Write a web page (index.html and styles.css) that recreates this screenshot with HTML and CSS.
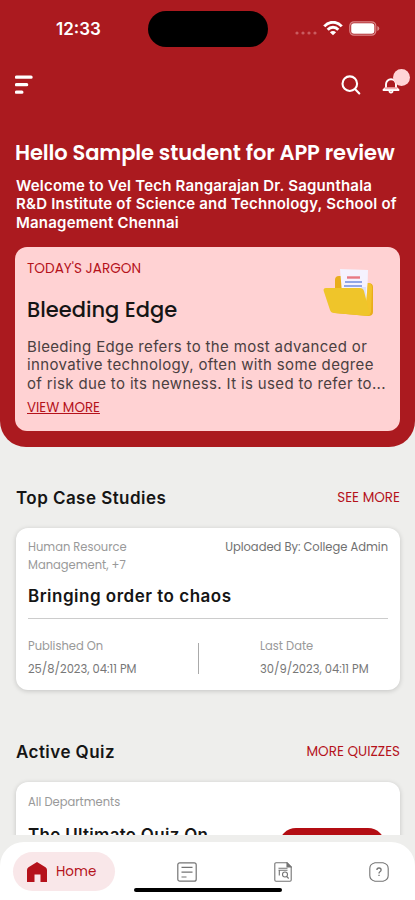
FILE: index.html
```html
<!DOCTYPE html>
<html lang="en">
<head>
    <meta charset="UTF-8">
    <meta name="viewport" content="width=device-width, initial-scale=1.0">
    <title>Home</title>
    <link rel="stylesheet" href="styles.css">
</head>
<body>
    <div class="content">
        <header class="hero">
            <div class="status-bar">
                <span class="time">12:33</span>
                <div class="island"></div>
                <div class="status-icons">
                    <svg class="signal" width="22" height="4" viewBox="0 0 22 4"><circle cx="2" cy="2" r="1.6"/><circle cx="8" cy="2" r="1.6"/><circle cx="14" cy="2" r="1.6"/><circle cx="20" cy="2" r="1.6"/></svg>
                    <svg class="wifi" width="20" height="15" viewBox="0 0 20 15" fill="none" stroke="#fff" stroke-width="2.9">
                        <path d="M1.3 5.4C6-.1 14-.1 18.7 5.4"/>
                        <path d="M4.7 8.7C7.7 5.5 12.3 5.5 15.3 8.7"/>
                        <path d="M10 14.3 6.9 11.2Q10 8.7 13.1 11.2Z" fill="#fff" stroke="none"/>
                    </svg>
                    <svg class="battery" width="31" height="15" viewBox="0 0 31 15">
                        <rect x=".8" y=".8" width="26" height="13.4" rx="4.2" fill="none" stroke="#db8789" stroke-width="1.2"/>
                        <rect x="2.2" y="2.2" width="23.2" height="10.6" rx="2.8" fill="#fff"/>
                        <path d="M28.3 5v5q2-.7 2-2.5T28.3 5Z" fill="#db8789"/>
                    </svg>
                </div>
            </div>
            <div class="toolbar">
                <svg class="menu" width="19" height="20" viewBox="0 0 19 20" stroke="#fff" stroke-width="3.2" stroke-linecap="round"><path d="M1.5 2.2h14.6M1.5 9.7h10.2M1.5 17.2h5.4"/></svg>
                <div class="actions">
                    <svg width="20" height="20" viewBox="0 0 20 20" fill="none" stroke="#fff" stroke-width="2.1" stroke-linecap="round"><circle cx="8.8" cy="8.7" r="7.3"/><path d="m14.2 14.2 4.1 4.2"/></svg>
                    <div class="bell">
                        <svg width="18" height="16" viewBox="0 0 18 16" fill="none" stroke="#fff" stroke-width="1.9" stroke-linejoin="round" stroke-linecap="round"><path d="M4 9.5V6.3a5 5 0 0 1 10 0v3.2l2.5 2.5h-15z"/><path d="M3.5 10.2h11" stroke="#f3aeb1"/><path d="M7.5 13.7q1.5 1.8 3 0"/></svg>
                        <span class="badge"></span>
                    </div>
                </div>
            </div>
            <h1>Hello Sample student for APP review</h1>
            <p class="welcome">Welcome to Vel Tech Rangarajan Dr. Sagunthala<br>R&amp;D Institute of Science and Technology, School of<br>Management Chennai</p>
            <section class="jargon">
                <div class="jargon-top">
                    <div>
                        <h3>TODAY'S JARGON</h3>
                        <h2>Bleeding Edge</h2>
                    </div>
                    <svg class="folder" width="52" height="48" viewBox="0 0 52 48">
                        <path d="M12 36V11q0-4 4-4h4l4 7h21q5 0 5 4v25q0 4-5 4L12 44Z" fill="#e9ad1b"/>
                        <path d="m17 0 28 1-1 38-24-3Z" fill="#f5f2fe"/>
                        <path d="M24 8.5h13" stroke="#e87983" stroke-width="2.4"/>
                        <path d="M22 13h17M21 17h18" stroke="#91a6e6" stroke-width="2"/>
                        <path d="m38 18 5 17V18Z" fill="#dce1fb"/>
                        <path d="M45 14q4 0 4 5l-1 24-2 4-4-5Z" fill="#f3c32a"/>
                        <path d="M3 19h34q3 0 4 3l5.500 22q0 3-4 2.800L11 44q-3 0-4-3L.7 22q-.7-3 2.300-3Z" fill="#efc52a"/>
                    </svg>
                </div>
                <p class="summary">Bleeding Edge refers to the most advanced or<br>innovative technology, often with some degree<br>of risk due to its newness. It is used to refer to...</p>
                <a class="view-more" href="#">VIEW MORE</a>
            </section>
        </header>
        <main>
            <div class="section-head">
                <h2>Top Case Studies</h2>
                <a href="#">SEE MORE</a>
            </div>
            <article class="card case">
                <div class="card-top">
                    <p class="tags">Human Resource<br>Management, +7</p>
                    <p class="uploader">Uploaded By: College Admin</p>
                </div>
                <h3>Bringing order to chaos</h3>
                <div class="dates">
                    <dl>
                        <dt>Published On</dt>
                        <dd>25/8/2023, 04:11 PM</dd>
                    </dl>
                    <dl class="last">
                        <dt>Last Date</dt>
                        <dd>30/9/2023, 04:11 PM</dd>
                    </dl>
                </div>
            </article>
            <div class="section-head quiz-head">
                <h2>Active Quiz</h2>
                <a href="#">MORE QUIZZES</a>
            </div>
            <article class="card quiz">
                <p class="departments">All Departments</p>
                <div class="quiz-row">
                    <h3>The Ultimate Quiz On</h3>
                    <span class="quiz-button"></span>
                </div>
            </article>
        </main>
    </div>
    <nav class="tab-bar">
        <div class="tabs">
            <a class="tab active" href="#">
                <svg width="20" height="20" viewBox="0 0 20 20" fill="#b5121b"><path d="M10 0 18.5 5.2Q20 6.200 20 8v12h-6.500v-7.500h-6V20H0V8q0-1.800 1.500-2.800Z"/></svg>
                <span>Home</span>
            </a>
            <a class="tab" href="#">
                <svg width="20" height="20" viewBox="0 0 20 20" fill="none" stroke="#747474" stroke-width="1.2"><rect x=".8" y=".8" width="18.4" height="18.4" rx="2"/><path d="M4.500 5.300h11M4.500 10.200h11M4.500 15h5"/></svg>
            </a>
            <a class="tab" href="#">
                <svg width="18" height="20" viewBox="0 0 18 20" fill="none" stroke="#747474" stroke-width="1.1"><path d="M13 .8H2Q.8.800.8 2v16q0 1.200 1.200 1.200h14q1.200 0 1.200-1.200V5Z"/><path d="M13 .8V5h4.200Z" fill="#747474"/><path d="M4.500 6.200h9M4.500 8.300h9M5.300 8.500v5"/><circle cx="11" cy="12.5" r="2.5"/><path d="m12.700 14.500 2 2"/></svg>
            </a>
            <a class="tab" href="#">
                <svg width="20" height="20" viewBox="0 0 20 20" fill="none" stroke="#747474" stroke-width="1.1"><path d="M6 .8h8Q19.200 2 19.200 6.500v7q0 4.500-5.200 5.700H6Q.8 18 .8 13.500v-7Q.8 2 6 .8Z"/><path d="M7.900 8q0-2 2.100-2t2.100 1.900q0 1.100-1.200 1.800-.9.600-.9 1.700M10 12.800v1.200" stroke-width="1.3"/></svg>
            </a>
        </div>
        <div class="home-indicator"></div>
    </nav>
</body>
</html>
```

FILE: styles.css
```css
* {
    margin: 0;
    padding: 0;
    box-sizing: border-box;
}

body {
    width: 415px;
    height: 900px;
    overflow: hidden;
    display: flex;
    flex-direction: column;
    background-color: #eeeeec;
    font-family: Poppins, Inter, "Liberation Sans", sans-serif;
    color: #151515;
    white-space: nowrap;
}

svg {
    display: block;
    flex-shrink: 0;
}

a {
    color: #b5121b;
    text-decoration: none;
}

.content {
    height: 835px;
    overflow: hidden;
}

.hero {
    height: 447px;
    padding: 0 15px;
    background-color: #ab1a1f;
    border-radius: 0 0 26px 26px;
    color: #fff;
}

.status-bar {
    height: 58px;
    padding-top: 11px;
    display: grid;
    grid-template-columns: 133px 120px 1fr;
    align-items: start;
}

.time,
.welcome,
.summary,
.section-head h2,
.card h3 {
    font-family: Inter, "Liberation Sans", sans-serif;
}

.time {
    padding: 7px 0 0 41px;
    font-size: 17px;
    line-height: 22px;
    font-weight: 600;
}

.island {
    height: 36px;
    border-radius: 18px;
    background-color: #000;
}

.status-icons {
    display: flex;
    align-items: center;
    padding: 10px 0 0 27px;
}

.signal {
    margin-top: 9px;
    fill: #c95c60;
}

.wifi {
    margin-left: 6px;
}

.battery {
    margin-left: 6px;
}

.toolbar {
    height: 79px;
    display: flex;
    justify-content: space-between;
    padding-top: 17px;
}

.actions {
    display: flex;
    gap: 21px;
}

.bell {
    position: relative;
    width: 18px;
    height: 20px;
    padding-top: 3px;
}

.badge {
    position: absolute;
    left: 11px;
    top: -6px;
    width: 17px;
    height: 17px;
    border-radius: 50%;
    background-color: #ffd4d6;
}

h1 {
    font-size: 21px;
    line-height: 32px;
    font-weight: 600;
    letter-spacing: -0.1px;
}

.welcome {
    margin: 8px 0 0 1px;
    font-size: 15px;
    line-height: 18.3px;
    font-weight: 600;
    letter-spacing: 0.21px;
}

.jargon {
    height: 184px;
    margin-top: 15px;
    padding: 13px 12px;
    border-radius: 12px;
    background-color: #ffd2d3;
    color: #151515;
}

.jargon-top {
    display: flex;
    justify-content: space-between;
}

.jargon h3 {
    font-size: 13.6px;
    line-height: 18px;
    font-weight: 400;
    color: #b5121b;
}

.jargon h2 {
    margin-top: 16px;
    font-size: 21px;
    line-height: 32px;
    font-weight: 500;
}

.folder {
    margin: 9px 13px 0 0;
}

.summary {
    margin-top: 12px;
    font-size: 15px;
    line-height: 18.5px;
    color: #4b4041;
    letter-spacing: 0.35px;
}

.view-more {
    display: block;
    margin-top: 5px;
    font-size: 13.4px;
    line-height: 20px;
    text-decoration: underline;
}

main {
    padding: 0 15px 0 16px;
}

.section-head {
    display: flex;
    justify-content: space-between;
    align-items: center;
    height: 24px;
    margin-top: 39px;
    font-size: 13.5px;
}

.section-head h2 {
    font-size: 17px;
    font-weight: 600;
    letter-spacing: 0.45px;
}

.card {
    margin-top: 18px;
    padding: 11px 12px;
    border-radius: 12px;
    background-color: #fff;
    box-shadow: 0 1px 5px rgba(0, 0, 0, 0.18);
}

.case {
    height: 162px;
}

.card-top {
    display: flex;
    justify-content: space-between;
    font-size: 11.5px;
    line-height: 17.5px;
}

.tags,
.departments,
dt {
    color: #999;
}

.uploader {
    color: #707070;
}

.card h3 {
    font-size: 17px;
    line-height: 24px;
    font-weight: 600;
    letter-spacing: 0.5px;
}

.case h3 {
    margin-top: 10px;
}

.dates {
    display: grid;
    grid-template-columns: 170px 1fr;
    margin-top: 10px;
    padding-top: 19px;
    border-top: 1px solid #ccc;
    font-size: 11.5px;
}

dt {
    line-height: 17px;
}

dd {
    margin-top: 6px;
    line-height: 17px;
    color: #777;
}

.last {
    height: 31px;
    margin-top: 5px;
    padding-left: 61px;
    border-left: 1px solid #aaa;
}

.last dt {
    margin-top: -5px;
}

.quiz-head {
    margin-top: 50px;
}

.quiz {
    height: 130px;
}

.departments {
    font-size: 11.5px;
    line-height: 18px;
}

.quiz-row {
    display: flex;
    justify-content: space-between;
    margin-top: 12px;
}

.quiz h3 {
    letter-spacing: 0.3px;
}

.quiz-button {
    width: 106px;
    height: 34px;
    margin: 5px 3px 0 0;
    border-radius: 17px;
    background-color: #b30d13;
}

.tab-bar {
    height: 58px;
    margin-top: 7px;
    padding-top: 10px;
    border-radius: 24px 24px 0 0;
    background-color: #fff;
}

.tabs {
    height: 39px;
    display: flex;
    align-items: center;
    justify-content: space-between;
    padding: 0 26px 0 13px;
}

.active {
    width: 102px;
    height: 39px;
    margin-right: -15px;
    padding-left: 14px;
    display: flex;
    align-items: center;
    gap: 9px;
    border-radius: 20px;
    background-color: #f9e7e9;
    font-size: 13.5px;
}

.home-indicator {
    width: 148px;
    height: 4px;
    margin: -3px auto 0;
    border-radius: 2px;
    background-color: #000;
    position: relative;
}
```
